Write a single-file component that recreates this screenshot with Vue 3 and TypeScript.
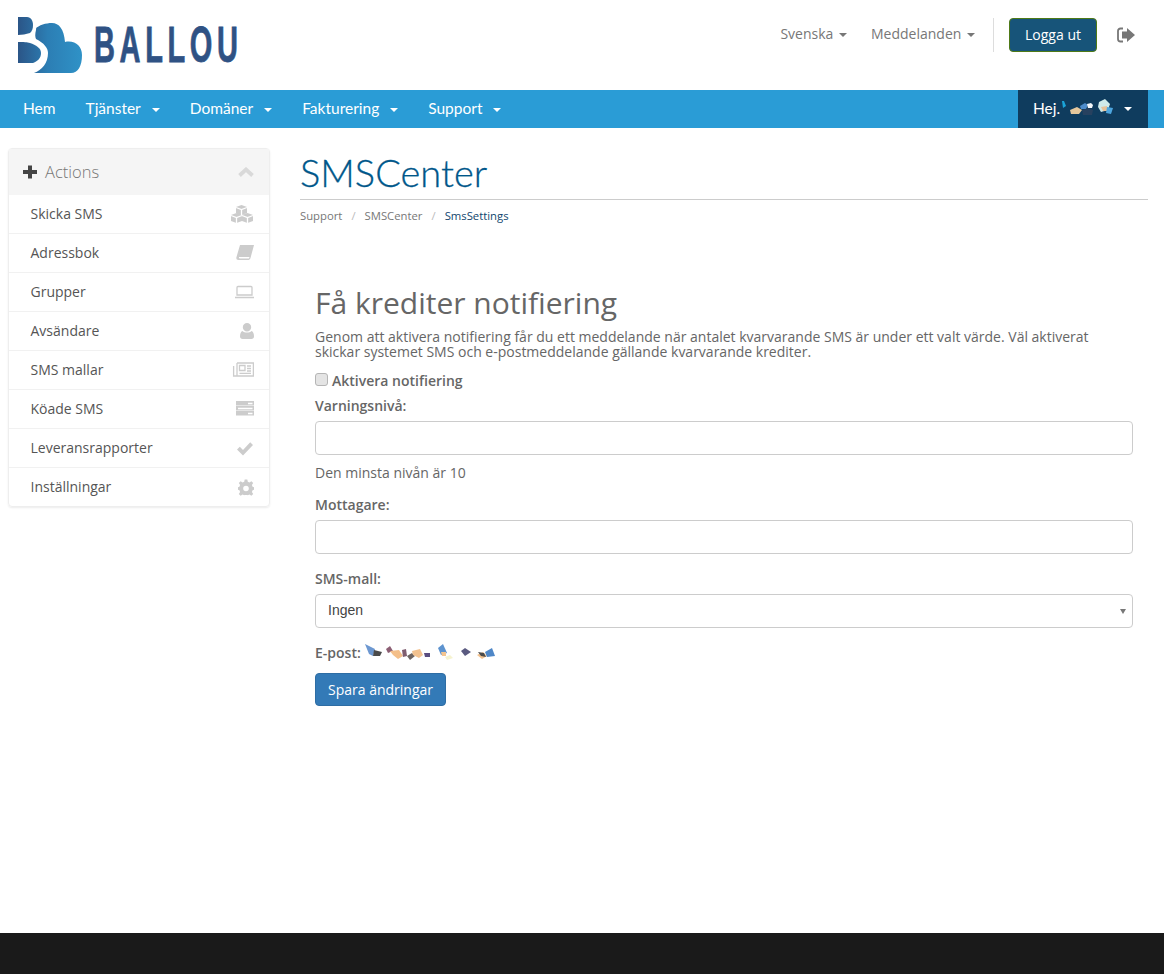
<template>
  <div class="page">
    <header class="top">
      <svg class="logo" width="222" height="60" viewBox="0 0 222 60">
        <defs>
          <linearGradient id="cloud" gradientUnits="userSpaceOnUse" x1="0" x2="66" y1="0" y2="0">
            <stop offset="0" stop-color="#2b5587" />
            <stop offset="0.45" stop-color="#2c7eb4" />
            <stop offset="1" stop-color="#2f93c8" />
          </linearGradient>
        </defs>
        <path fill="url(#cloud)" d="M17 14C21 10 28 8 34 8C41 8 46 14 47 27C57 25 64 31 64 40C64 51 60 58 53 58H7L0 55V14Z" />
        <path fill="#fff" d="M0 0H15C18 5 19 10 18 15C17 19 17 22 18 24C26 28 30 33 30 38C30 48 24 55 16 58H0Z" />
        <path fill="url(#cloud)" d="M0 2H9C13 2 15 6 15 10C15 14 14 16 12 18C8 19 4 20 0 20Z" />
        <path fill="url(#cloud)" d="M0 27C6 27 9 27 12 28C18 30 23 33 23 38C23 43 20 46 15 48C10 48 5 48 0 48Z" />
        <text class="wordmark" transform="translate(76 47) scale(0.58 1)" letter-spacing="8">BALLOU</text>
      </svg>
      <nav class="top-links">
        <a class="top-link">Svenska <i class="caret"></i></a>
        <a class="top-link">Meddelanden <i class="caret"></i></a>
        <span class="divider"></span>
        <button class="logout" type="button">Logga ut</button>
        <svg class="signout" width="18" height="16" viewBox="0 0 18 16">
          <path fill="none" stroke="#777" stroke-width="1.8" d="M6 1.500H3.500C2 1.500 1 2.500 1 4V12C1 13.500 2 14.500 3.500 14.500H6" />
          <path fill="#777" d="M5 4.500H10V1L18 8L10 15V11.500H5Z" />
        </svg>
      </nav>
    </header>

    <div class="menu">
      <ul class="menu-left">
        <li v-for="item in menu" :key="item.label">
          {{ item.label }}<i v-if="item.caret" class="caret"></i>
        </li>
      </ul>
      <div class="hello">
        Hej.
        <svg class="blur" width="52" height="20" viewBox="0 0 52 20">
          <polygon v-for="(s, i) in helloBlobs" :key="i" :points="s.p" :fill="s.c" />
        </svg>
        <i class="caret"></i>
      </div>
    </div>

    <div class="body">
      <aside class="panel">
        <div class="panel-head">
          <svg width="14" height="14" viewBox="0 0 14 14"><path fill="#444" d="M5 0.500H9V5H14V9H9V13.500H5V9H0V5H5Z" /></svg>
          <span class="panel-title">Actions</span>
          <svg class="chev" width="16" height="10" viewBox="0 0 16 10"><path fill="none" stroke="#d9d9d9" stroke-width="3.800" d="M1.500 8.500L8 2.500L14.500 8.500" /></svg>
        </div>
        <a v-for="row in actions" :key="row.label" class="panel-row">
          <span class="row-label">{{ row.label }}</span>
          <svg width="24" height="18" viewBox="0 0 24 18" class="row-icon">
            <path v-if="row.d" fill="#ccc" :d="row.d" />
            <path v-if="row.line" fill="none" :stroke="row.d ? '#fff' : '#ccc'" stroke-width="1.300" :d="row.line" />
          </svg>
        </a>
      </aside>

      <main class="content">
        <h1 class="title">SMSCenter</h1>
        <ol class="crumbs">
          <li>Support</li>
          <li class="sep">/</li>
          <li>SMSCenter</li>
          <li class="sep">/</li>
          <li class="current">SmsSettings</li>
        </ol>

        <form class="notify" @submit.prevent>
          <h2>Få krediter notifiering</h2>
          <p class="lead">Genom att aktivera notifiering får du ett meddelande när antalet kvarvarande SMS är under ett valt värde. Väl aktiverat skickar systemet SMS och e-postmeddelande gällande kvarvarande krediter.</p>
          <label class="check"><input type="checkbox" /> Aktivera notifiering</label>
          <label class="field-label level-label" for="level">Varningsnivå:</label>
          <input id="level" class="control" type="text" />
          <p class="hint">Den minsta nivån är 10</p>
          <label class="field-label to-label" for="to">Mottagare:</label>
          <input id="to" class="control" type="text" />
          <label class="field-label tpl-label" for="tpl">SMS-mall:</label>
          <div class="select-wrap">
            <select id="tpl" class="control select"><option>Ingen</option></select>
            <i class="select-arrow"></i>
          </div>
          <div class="email">
            <b>E-post:</b>
            <svg class="blur" width="134" height="18" viewBox="0 0 134 18">
              <polygon v-for="(s, i) in emailBlobs" :key="i" :points="s.p" :fill="s.c" />
            </svg>
          </div>
          <button class="save" type="submit">Spara ändringar</button>
        </form>
      </main>
    </div>

    <footer class="foot"></footer>
  </div>
</template>

<script setup lang="ts">
interface ActionRow {
  label: string
  d?: string
  line?: string
}

const menu = [
  { label: 'Hem', caret: false },
  { label: 'Tjänster', caret: true },
  { label: 'Domäner', caret: true },
  { label: 'Fakturering', caret: true },
  { label: 'Support', caret: true },
]

const actions: ActionRow[] = [
  {
    label: 'Skicka SMS',
    d: 'M11.500 0L17 2V8L11.500 10L6 8V2ZM6.500 8L12 10V16L6.500 18L1 16V10ZM17.500 8L23 10V16L17.500 18L12 16V10Z',
    line: 'M6 2.500L11.500 4.500L17 2.500M11.500 4.500V10M1 10.500L6.500 12.500L12 10.500M6.500 12.500V18M12 10.500L17.500 12.500L23 10.500M17.500 12.500V18',
  },
  {
    label: 'Adressbok',
    d: 'M10 1H24L20.500 14C20 15.500 19 16 18 16H8.500C6.500 16 6 14.500 6.500 13ZM9 13C8.800 14 9.200 14.500 10 14.500H19L19.500 13Z',
  },
  {
    label: 'Grupper',
    line: 'M8 3.500H21C21.500 3.500 22 4 22 4.500V12H7V4.500C7 4 7.500 3.500 8 3.500ZM5 14.500H24',
  },
  {
    label: 'Avsändare',
    d: 'M17 1A4.200 4.200 0 1 1 17 9.400A4.200 4.200 0 1 1 17 1ZM12.500 9C14.500 11 19.500 11 21.500 9C23.500 9.500 24 12.500 24 14.500C24 16 23 17 21.500 17H12.500C11 17 10 16 10 14.500C10 12.500 10.500 9.500 12.500 9Z',
  },
  {
    label: 'SMS mallar',
    line: 'M7 2H23.400V15H3.600V5M7 2V15M9.500 4.500H15V9.500H9.500ZM17 5H21M17 7.500H21M17 10H21M9.500 12.300H21',
  },
  {
    label: 'Köade SMS',
    d: 'M6 1H24V5.500H6ZM6 6H24V10.500H6ZM6 11H24V15.500H6Z',
    line: 'M18 3.500H22.500M8 8.500H22.500M18 13.500H22.500',
  },
  {
    label: 'Leveransrapporter',
    d: 'M13 16.500L7 10.500L9.800 7.700L13 11L20.200 3.300L23 6Z',
  },
  {
    label: 'Inställningar',
    d: 'M14.700 1.500H17.300L17.800 3.800L19.400 4.500L21.400 3.200L23.200 5L21.900 7L22.600 8.700L24 9.200V11.800L22.600 12.300L21.900 14L23.200 16L21.400 17.800L19.400 16.500L17.800 17.200L17.300 17H14.700L14.200 17.200L12.600 16.500L10.600 17.800L8.800 16L10.100 14L9.400 12.300L8 11.800V9.200L9.400 8.700L10.100 7L8.800 5L10.600 3.200L12.600 4.500L14.200 3.800ZM16 7.700A2.800 2.800 0 1 0 16 13.300A2.800 2.800 0 1 0 16 7.700Z',
  },
]

const helloBlobs = [
  { p: '0,3 2,3 4,8 1,10', c: '#1ba4d8' },
  { p: '8,12 15,9 20,12 17,16 9,16', c: '#e5c79c' },
  { p: '18,8 23,5 26,7 24,11 19,11', c: '#4d8ccb' },
  { p: '20,12 27,10 31,12 30,17 21,17', c: '#27415f' },
  { p: '25,6 29,5 31,7 30,10 26,10', c: '#f4f8fb' },
  { p: '37,4 43,1 48,6 46,12 39,14 36,9', c: '#cfeaea' },
  { p: '39,9 45,8 46,13 41,13', c: '#e6c29a' },
  { p: '45,9 51,10 49,16 44,15', c: '#4da6df' },
]

const emailBlobs = [
  { p: '0,1 10,6 8,13 4,11', c: '#6d98d1' },
  { p: '9,7 17,9 15,13 8,13', c: '#4a4a4a' },
  { p: '21,6 25,3 28,8 23,10', c: '#8c5f74' },
  { p: '25,8 34,7 38,13 33,16 28,12', c: '#f4bf89' },
  { p: '37,7 41,6 42,13 38,14', c: '#7f5d6f' },
  { p: '42,13 47,10 50,13 45,17', c: '#6d6461' },
  { p: '47,8 55,6 58,12 54,15 48,12', c: '#f3c28f' },
  { p: '59,10 65,10 65,14 60,14', c: '#5a4d80' },
  { p: '73,5 78,1 82,10 76,12', c: '#5d93cf' },
  { p: '76,9 81,9 81,13 77,13', c: '#f4c58f' },
  { p: '80,14 85,12 88,15 82,17', c: '#f6f3d0' },
  { p: '96,8 100,5 106,9 100,13', c: '#5a5a80' },
  { p: '112,12 118,9 122,13 117,16', c: '#f3c28f' },
  { p: '113,9 119,10 121,14 116,13', c: '#4a4a4a' },
  { p: '120,9 127,5 130,13 122,14', c: '#4f87c7' },
]
</script>

<style>
html, body {
  margin: 0;
  background: #fff;
}
</style>

<style scoped>
.page {
  min-height: 974px;
  display: flex;
  flex-direction: column;
  font-family: "Open Sans", "Liberation Sans", sans-serif;
  font-size: 14px;
  color: #666;
}
.top {
  height: 90px;
  display: flex;
  justify-content: space-between;
  padding: 0 29px 0 18px;
  box-sizing: border-box;
}
.logo {
  margin-top: 15px;
  overflow: visible;
}
.wordmark {
  font-family: "Liberation Sans", sans-serif;
  font-size: 50px;
  font-weight: 700;
  fill: #2f5284;
  stroke: #2f5284;
  stroke-width: 0.8px;
}
.top-links {
  display: flex;
  align-items: center;
  height: 70px;
  color: #777;
}
.top-link {
  margin-right: 24px;
  padding-bottom: 3px;
  white-space: nowrap;
}
.top-link:nth-child(2) {
  margin-right: 18px;
}
.caret {
  display: inline-block;
  width: 0;
  height: 0;
  margin-left: 2px;
  vertical-align: middle;
  border-top: 4px solid;
  border-left: 4px solid transparent;
  border-right: 4px solid transparent;
}
.divider {
  width: 1px;
  height: 34px;
  background: #ddd;
  margin-right: 15px;
}
.logout {
  width: 88px;
  height: 34px;
  padding: 0 0 2px;
  background: #175479;
  color: #fff;
  border: 1px solid #4f7a17;
  border-radius: 4px;
  font: 14px "Open Sans", sans-serif;
  margin-right: 20px;
}
.menu {
  height: 38px;
  background: #2a9cd6;
  display: flex;
  justify-content: space-between;
  padding: 0 16px 0 8px;
  color: #fff;
  font-family: Lato, "Liberation Sans", sans-serif;
  font-size: 15.500px;
}
.menu-left {
  display: flex;
  list-style: none;
  margin: 0;
  padding: 0;
}
.menu-left li {
  padding: 0 15px;
  line-height: 37px;
}
.menu-left .caret {
  margin-left: 11px;
}
.hello {
  width: 130px;
  box-sizing: border-box;
  background: #0f3c5e;
  padding: 0 0 3px 15px;
  display: flex;
  align-items: center;
  gap: 2px;
}
.hello .caret {
  margin: 3px 0 0 8px;
}
.blur {
  filter: blur(0.3px);
}
.body {
  flex: 1;
  display: flex;
  padding: 20px 16px 0 8px;
  gap: 30px;
}
.panel {
  width: 262px;
  flex: none;
  align-self: flex-start;
  box-sizing: border-box;
  border: 1px solid #eee;
  border-radius: 4px;
  box-shadow: 0 1px 2px rgba(0, 0, 0, 0.08);
}
.panel-head {
  height: 46px;
  background: #f5f5f5;
  display: flex;
  align-items: center;
  padding: 0 15px 0 14px;
  color: #777;
}
.panel-title {
  font-size: 16.500px;
  font-weight: 300;
  margin: 0 0 2px 8px;
}
.chev {
  margin-left: auto;
}
.panel-row {
  height: 39px;
  box-sizing: border-box;
  padding: 0 15px 0 21.500px;
  display: flex;
  align-items: center;
  justify-content: space-between;
  border-bottom: 1px solid #f1f1f1;
  color: #555;
}
.row-label {
  margin-bottom: 2px;
}
.panel-row:last-child {
  height: 38px;
  border-bottom: 0;
}
.content {
  flex: 1;
  min-width: 0;
}
.title {
  margin: 0;
  padding-top: 1px;
  height: 50px;
  border-bottom: 1px solid #ccc;
  font-family: Lato, "Liberation Sans", sans-serif;
  font-size: 38px;
  font-weight: 300;
  line-height: 46px;
  color: #00578a;
  -webkit-text-stroke: 0.3px #00578a;
}
.crumbs {
  display: flex;
  list-style: none;
  margin: 8px 0 0;
  padding: 0;
  font-size: 11.300px;
  line-height: 15px;
  color: #777;
}
.crumbs .sep {
  margin: 0 9px;
  color: #bbb;
}
.crumbs .current {
  color: #10466e;
}
.notify {
  padding: 60px 15px 0;
  display: flex;
  flex-direction: column;
  align-items: flex-start;
}
.notify h2 {
  margin: 0;
  font-size: 30px;
  font-weight: 400;
  line-height: 40px;
  color: #666;
}
.lead {
  margin: 6px 0 0;
  line-height: 15px;
}
.check {
  display: flex;
  align-items: center;
  gap: 4px;
  margin-top: 11px;
  height: 20px;
  font-weight: 600;
}
.check input {
  appearance: none;
  box-sizing: border-box;
  margin: 0 0 2px;
  width: 13px;
  height: 13px;
  background: #e4e4e4;
  border: 1px solid #b5b5b5;
  border-radius: 3px;
}
.field-label {
  font-weight: 600;
  line-height: 20px;
}
.level-label {
  margin-top: 6px;
}
.to-label {
  margin-top: 12px;
}
.tpl-label {
  margin-top: 15px;
}
.control {
  width: 100%;
  height: 34px;
  box-sizing: border-box;
  border: 1px solid #ccc;
  border-radius: 4px;
  background: #fff;
  padding: 0 12px;
  margin-top: 5px;
  font-family: "Liberation Sans", sans-serif;
  font-size: 14px;
  color: #444;
}
.hint {
  margin: 8px 0 0;
  line-height: 20px;
}
.select-wrap {
  position: relative;
  width: 100%;
}
.select {
  display: block;
  appearance: none;
  padding-bottom: 2px;
}
.select-arrow {
  position: absolute;
  right: 7px;
  top: 20px;
  border-top: 5px solid #777;
  border-left: 3px solid transparent;
  border-right: 3px solid transparent;
}
.email {
  display: flex;
  align-items: center;
  gap: 4px;
  margin-top: 14px;
  height: 20px;
}
.email b {
  font-weight: 600;
}
.save {
  margin-top: 11px;
  width: 131px;
  height: 33px;
  background: #337ab7;
  border: 1px solid #2e6da4;
  border-radius: 4px;
  color: #fff;
  font: 14px "Open Sans", sans-serif;
}
.foot {
  height: 41px;
  background: #1a1a1a;
}
</style>
